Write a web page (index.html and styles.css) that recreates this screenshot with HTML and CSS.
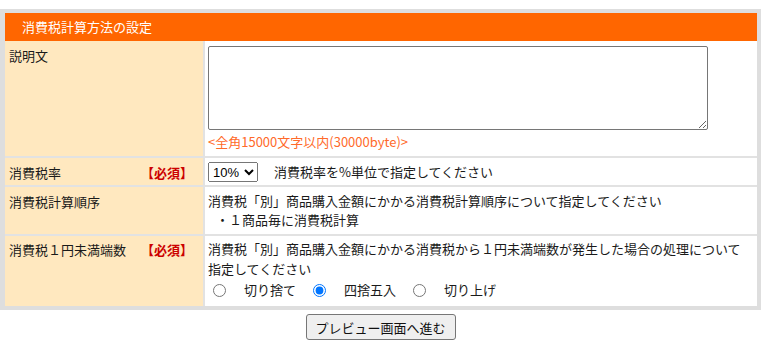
FILE: index.html
```html
<!DOCTYPE html>
<html lang="ja">

<head>
    <meta charset="UTF-8">
    <meta name="viewport" content="width=device-width, initial-scale=1.0">
    <title>消費税計算方法の設定</title>
    <link rel="stylesheet" href="styles.css">
</head>

<body>
    <form class="settings">

        <!-- settings panel -->
        <div class="panel">
            <h2 class="panel-title">消費税計算方法の設定</h2>

            <table class="form-table">
                <tr class="row-desc">
                    <th>説明文</th>
                    <td>
                        <textarea class="desc-area" name="description"></textarea>
                        <div class="note">&lt;全角15000文字以内(30000byte)&gt;</div>
                    </td>
                </tr>
                <tr class="row-rate">
                    <th><span>消費税率</span><span class="required">【必須】</span></th>
                    <td>
                        <select class="rate-select" name="rate">
                            <option>10%</option>
                            <option>8%</option>
                        </select>
                        <span class="hint">消費税率を%単位で指定してください</span>
                    </td>
                </tr>
                <tr>
                    <th>消費税計算順序</th>
                    <td>
                        <div>消費税「別」商品購入金額にかかる消費税計算順序について指定してください</div>
                        <div class="sub">・１商品毎に消費税計算</div>
                    </td>
                </tr>
                <tr class="row-round">
                    <th><span>消費税１円未満端数</span><span class="required">【必須】</span></th>
                    <td>
                        <div>消費税「別」商品購入金額にかかる消費税から１円未満端数が発生した場合の処理について指定してください</div>
                        <div class="radios">
                            <label><input type="radio" name="round" value="down">切り捨て</label>
                            <label><input type="radio" name="round" value="half" checked>四捨五入</label>
                            <label><input type="radio" name="round" value="up">切り上げ</label>
                        </div>
                    </td>
                </tr>
            </table>
        </div>

        <!-- preview button -->
        <div class="actions">
            <button type="submit" class="preview-btn">プレビュー画面へ進む</button>
        </div>
    </form>
</body>

</html>
```

FILE: styles.css
```css
body {
    margin: 0;
    background: #fff;
    color: #1a1a1a;
    font-family: "Noto Sans CJK JP", "Noto Sans", sans-serif;
    font-size: 13px;
}

.settings {
    width: 761px;
    margin-top: 9px;
}

.panel {
    background: #dedede;
    padding: 4px 4px 4px 5px;
}

.panel-title {
    margin: 0;
    height: 28px;
    line-height: 27px;
    padding-left: 17px;
    background: #ff6600;
    color: #fff;
    font-size: 13px;
    font-weight: normal;
}

.form-table {
    width: 100%;
    border-collapse: collapse;

    & th,
    & td {
        vertical-align: top;
        line-height: 19px;
    }

    & tr + tr th,
    & tr + tr td {
        border-top: 2px solid #e2e2e2;
    }

    & th {
        width: 184px;
        background: #ffe8bf;
        padding: 5px 10px 5px 4px;
        font-weight: normal;
        text-align: left;
        border-right: 2px solid #e2e2e2;

        & .required {
            float: right;
            color: #c00;
            font-weight: bold;
        }
    }

    & td {
        background: #fff;
        padding: 4px 5px 5px 3px;
    }
}

.row-desc td {
    padding-top: 5px;
}

.desc-area {
    display: block;
    width: 500px;
    height: 84px;
    margin: 0;
    box-sizing: border-box;
    border: 1px solid #767676;
    border-radius: 2px;
    resize: both;
}

.note {
    margin-top: 2px;
    color: #ff6a2a;
}

.row-rate th {
    padding-bottom: 3px;
}

.row-rate td {
    padding-bottom: 3px;
}

.rate-select {
    width: 50px;
    height: 20px;
    margin: 0;
    padding: 0;
    font-family: "Liberation Sans", sans-serif;
    font-size: 13px;
    vertical-align: top;
}

.hint {
    margin-left: 13px;
}

.sub {
    padding-left: 8px;
}

.row-round td {
    padding-top: 3px;
    line-height: 20px;
}

.row-round th {
    padding-top: 4px;
}

.radios {
    display: flex;
    align-items: center;
    height: 22px;

    & label {
        display: inline-flex;
        align-items: center;
        margin-right: 12px;
    }

    & input {
        width: 13px;
        height: 13px;
        margin: 0 18px 0 5px;
    }
}

.actions {
    text-align: center;
    padding-top: 4px;
}

.preview-btn {
    width: 150px;
    height: 26px;
    font-family: "Noto Sans CJK JP", sans-serif;
    font-size: 13px;
    color: #111;
    background: #efefef;
    border: 1px solid #767676;
    border-radius: 3px;
    padding: 0;
}
```
